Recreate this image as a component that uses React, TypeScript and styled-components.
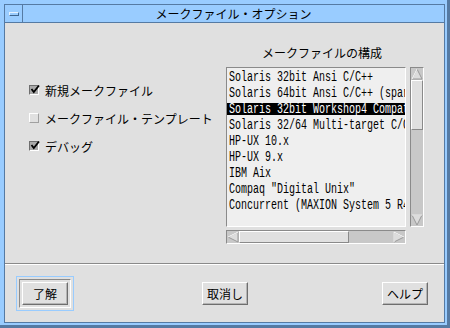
import React from 'react';
import styled, { createGlobalStyle } from 'styled-components';

const BG = '#e0e0e0';
const DARK = '#8a8a8a';
const LIGHT = '#ffffff';
const TROUGH = '#c8c8c8';
const FRAME = '#99ccff';
const FRAME_DARK = '#557aa3';

const GlobalStyle = createGlobalStyle`
  html, body {
    margin: 0;
    padding: 0;
    background: #ffffff;
  }
  body {
    font-family: "Noto Sans CJK JP", "Noto Sans", sans-serif;
  }
`;

const SWindow = styled.div`
  width: 450px;
  height: 328px;
  box-sizing: border-box;
  background: ${FRAME};
  box-shadow: inset -3px -3px 0 ${FRAME_DARK};
  padding: 4px 5px 5px 4px;
  display: flex;
`;

const SInner = styled.div`
  flex: 1;
  display: flex;
  flex-direction: column;
  border: 1px solid ${FRAME_DARK};
  background: ${BG};
  min-width: 0;
`;

const STitleBar = styled.div`
  flex: 0 0 18px;
  box-sizing: border-box;
  display: flex;
  background: ${FRAME};
  border-bottom: 1px solid ${FRAME_DARK};
`;

const SMenuButton = styled.div`
  width: 18px;
  box-sizing: border-box;
  border-right: 1px solid ${FRAME_DARK};
  display: flex;
  align-items: center;
  justify-content: center;
  &::after {
    content: '';
    width: 10px;
    height: 4px;
    box-sizing: border-box;
    border: 1px solid;
    border-color: #e4f2ff #3f6690 #3f6690 #e4f2ff;
  }
`;

const STitle = styled.div`
  flex: 1;
  text-align: center;
  font-size: 12px;
  line-height: 17px;
  color: #000;
`;

const SMain = styled.div`
  flex: 1;
  display: flex;
`;

const SOptions = styled.div`
  flex: 1;
  display: flex;
  flex-direction: column;
  gap: 12px;
  padding: 59px 0 0 24px;
`;

const SCheckRow = styled.label`
  display: flex;
  align-items: center;
  gap: 6px;
  height: 16px;
  font-size: 12px;
  color: #000;
  white-space: nowrap;
`;

const SCheckBox = styled.span<{ checked: boolean }>`
  position: relative;
  width: 10px;
  height: 10px;
  box-sizing: border-box;
  border: 1px solid;
  border-color: ${({ checked }) => (checked ? `#6e6e6e ${LIGHT} ${LIGHT} #6e6e6e` : `${LIGHT} #a0a0a0 #a0a0a0 ${LIGHT}`)};
  background: ${({ checked }) => (checked ? '#a9a9a9' : BG)};
  & svg {
    position: absolute;
    left: 0;
    top: -2px;
    overflow: visible;
  }
`;

const SConfig = styled.div`
  width: 198px;
  margin-right: 20px;
  padding-top: 23px;
  display: flex;
  flex-direction: column;
`;

const SConfigTitle = styled.div`
  font-size: 12px;
  line-height: 14px;
  text-align: center;
  padding-right: 6px;
  margin-bottom: 7px;
  color: #000;
`;

const SScrolled = styled.div`
  display: grid;
  grid-template-columns: 180px 14px;
  grid-template-rows: 160px 14px;
  column-gap: 4px;
  row-gap: 3px;
`;

const SList = styled.div`
  box-sizing: border-box;
  border: 1px solid;
  border-color: ${DARK} ${LIGHT} ${LIGHT} ${DARK};
  background: #efefef;
  padding-top: 3px;
  overflow: hidden;
`;

const SItem = styled.div<{ selected?: boolean }>`
  height: 12px;
  margin-bottom: 4px;
  padding-left: 2px;
  background: ${({ selected }) => (selected ? '#000' : 'transparent')};
  color: ${({ selected }) => (selected ? '#fff' : '#000')};
  white-space: nowrap;
  font-size: 14px;
  line-height: 12px;
`;

const SItemText = styled.span`
  display: inline-block;
  vertical-align: top;
  font-family: "Liberation Mono", "DejaVu Sans Mono", monospace;
  font-size: 14px;
  line-height: 13px;
  transform: scaleX(0.714);
  transform-origin: left center;
`;

const SScrollBar = styled.div<{ horizontal?: boolean }>`
  box-sizing: border-box;
  display: flex;
  flex-direction: ${({ horizontal }) => (horizontal ? 'row' : 'column')};
  border: 1px solid;
  border-color: ${DARK} ${LIGHT} ${LIGHT} ${DARK};
  background: ${TROUGH};
`;

const SArrow = styled.svg`
  flex: 0 0 12px;
  width: 12px;
  height: 12px;
  display: block;
`;

const SThumb = styled.div<{ horizontal?: boolean }>`
  box-sizing: border-box;
  flex: 0 0 ${({ horizontal }) => (horizontal ? '110px' : '50px')};
  background: ${BG};
  border: 1px solid;
  border-color: ${LIGHT} ${DARK} ${DARK} ${LIGHT};
`;

const STrough = styled.div`
  flex: 1;
`;

const SSeparator = styled.div`
  border-top: 1px solid ${DARK};
  border-bottom: 1px solid ${LIGHT};
`;

const SActions = styled.div`
  flex: 0 0 57px;
  display: grid;
  grid-template-columns: 1fr auto 1fr;
  align-items: center;
  padding: 0 16px 0 17px;
`;

const SDefaultRing = styled.div`
  justify-self: start;
  border: 1px solid ${FRAME};
  padding: 2px;
  margin: -7px -6px -6px -6px;
`;

const SDefaultFrame = styled.div`
  border: 1px solid;
  border-color: ${DARK} ${LIGHT} ${LIGHT} ${DARK};
  padding: 2px;
  display: flex;
`;

const SButton = styled.button<{ align?: 'start' | 'center' | 'end' }>`
  justify-self: ${({ align }) => align || 'center'};
  width: 46px;
  height: 23px;
  box-sizing: border-box;
  margin: 0;
  padding: 0;
  font-family: "Noto Sans CJK JP", "Noto Sans", sans-serif;
  font-size: 12px;
  color: #000;
  background: ${BG};
  border: 1px solid;
  border-color: ${LIGHT} #6e6e6e #6e6e6e ${LIGHT};
  box-shadow: inset -1px -1px 0 #b4b4b4;
`;

const Arrow = ({ dir }: { dir: 'up' | 'down' | 'left' | 'right' }) => {
  const pts = {
    up: { a: '6,1', b: '1,11', c: '11,11' },
    down: { a: '1,1', b: '11,1', c: '6,11' },
    left: { a: '1,6', b: '11,1', c: '11,11' },
    right: { a: '1,1', b: '11,6', c: '1,11' },
  }[dir];
  const lightEdge =
    dir === 'down' ? `${pts.a} ${pts.b}` : dir === 'right' ? `${pts.c} ${pts.a} ${pts.b}` : `${pts.b} ${pts.a}`;
  return (
    <SArrow viewBox="0 0 12 12">
      <polygon points={`${pts.a} ${pts.b} ${pts.c}`} fill="#dcdcdc" stroke="#9a9a9a" strokeWidth="1" />
      <polyline points={lightEdge} fill="none" stroke="#ffffff" strokeWidth="1" />
    </SArrow>
  );
};

const Check = () => (
  <svg width="10" height="10" viewBox="0 0 10 10">
    <polyline points="1.5,5 3.8,8 9,1.5" fill="none" stroke="#000" strokeWidth="1.8" />
  </svg>
);

const options = [
  { label: '新規メークファイル', checked: true },
  { label: 'メークファイル・テンプレート', checked: false },
  { label: 'デバッグ', checked: true },
];

const configs = [
  'Solaris 32bit Ansi C/C++',
  'Solaris 64bit Ansi C/C++ (sparcv9)',
  'Solaris 32bit Workshop4 Compatibility',
  'Solaris 32/64 Multi-target C/C++',
  'HP-UX 10.x',
  'HP-UX 9.x',
  'IBM Aix',
  'Compaq "Digital Unix"',
  'Concurrent (MAXION System 5 R4)',
];

const App = () => (
  <>
    <GlobalStyle />
    <SWindow>
      <SInner>
        <STitleBar>
          <SMenuButton />
          <STitle>メークファイル・オプション</STitle>
        </STitleBar>
        <SMain>
          <SOptions>
            {options.map(o => (
              <SCheckRow key={o.label}>
                <SCheckBox checked={o.checked}>{o.checked && <Check />}</SCheckBox>
                {o.label}
              </SCheckRow>
            ))}
          </SOptions>
          <SConfig>
            <SConfigTitle>メークファイルの構成</SConfigTitle>
            <SScrolled>
              <SList>
                {configs.map((c, i) => (
                  <SItem key={c} selected={i === 2}>
                    <SItemText>{c}</SItemText>
                  </SItem>
                ))}
              </SList>
              <SScrollBar>
                <Arrow dir="up" />
                <SThumb />
                <STrough />
                <Arrow dir="down" />
              </SScrollBar>
              <SScrollBar horizontal>
                <Arrow dir="left" />
                <SThumb horizontal />
                <STrough />
                <Arrow dir="right" />
              </SScrollBar>
            </SScrolled>
          </SConfig>
        </SMain>
        <SSeparator />
        <SActions>
          <SDefaultRing>
            <SDefaultFrame>
              <SButton>了解</SButton>
            </SDefaultFrame>
          </SDefaultRing>
          <SButton>取消し</SButton>
          <SButton align="end">ヘルプ</SButton>
        </SActions>
      </SInner>
    </SWindow>
  </>
);

export default App;
